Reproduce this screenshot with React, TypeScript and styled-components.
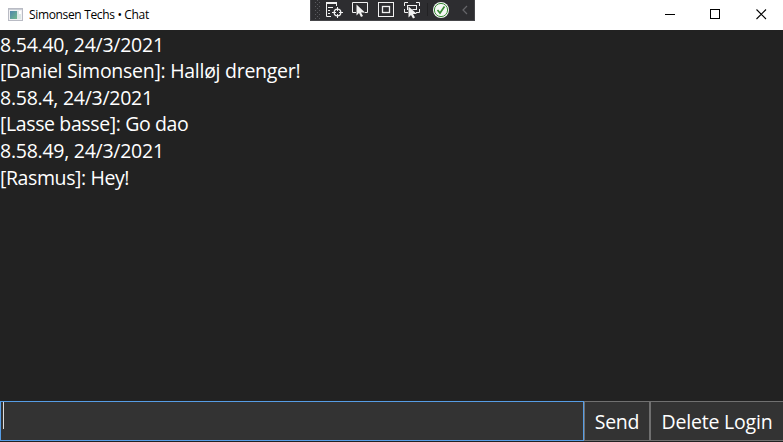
import React from "react";
import styled, { createGlobalStyle } from "styled-components";

const GlobalStyle = createGlobalStyle`
  * { box-sizing: border-box; }
  body { margin: 0; background: #222222; overflow: hidden; }
`;

const Window = styled.main`
  width: 783px;
  height: 442px;
  display: flex;
  flex-direction: column;
  background: #222222;
  color: #ffffff;
  font-family: "Open Sans", "Noto Sans", sans-serif;
  font-size: 19.5px;
  position: relative;
  overflow: hidden;
`;

const TitleBar = styled.header`
  height: 30px;
  flex: none;
  display: flex;
  align-items: center;
  background: #ffffff;
  color: #000000;
  padding-left: 8px;
`;

const Title = styled.h1`
  margin: 0 auto 0 6px;
  font-size: 12px;
  font-weight: 400;
  line-height: 30px;
  letter-spacing: -0.34px;
  white-space: nowrap;
`;

const WindowControls = styled.div`
  display: flex;
  margin-right: -1px;
`;

const WindowButton = styled.button`
  width: 45.5px;
  height: 30px;
  padding: 0 0 2px;
  border: 0;
  background: transparent;
  display: grid;
  place-items: center;
`;

const DebugBar = styled.div`
  position: absolute;
  left: 310px;
  top: 0;
  width: 165px;
  height: 21px;
  background: #2d2d30;
  border: 1px solid #46464a;
  border-top: 0;

  svg { display: block; margin-left: -1px; }
`;

const Messages = styled.section`
  flex: 1;
  padding-top: 1.6px;
`;

const Line = styled.div<{ $spacing: number }>`
  height: 26.6px;
  line-height: 26.6px;
  white-space: pre;
  letter-spacing: ${(p) => p.$spacing}px;
`;

const Composer = styled.footer`
  height: 41px;
  flex: none;
  display: flex;
  padding-bottom: 1px;
`;

const Input = styled.div`
  width: 584px;
  flex: none;
  height: 40px;
  background: #333333;
  border: 1px solid #569de5;
  padding-left: 2px;
`;

const Caret = styled.div`
  width: 1px;
  height: 27px;
  background: #dddddd;
`;

const Action = styled.button<{ $width: number; $spacing: number }>`
  width: ${(p) => p.$width}px;
  height: 40px;
  flex: none;
  padding: 1px 0 0;
  border: 1px solid #707070;
  background: #333333;
  color: #ffffff;
  font: inherit;
  letter-spacing: ${(p) => p.$spacing}px;
  white-space: nowrap;
`;

const messages = [
  { text: "8.54.40, 24/3/2021", spacing: -0.26 },
  { text: "[Daniel Simonsen]: Halløj drenger!", spacing: -0.27 },
  { text: "8.58.4, 24/3/2021", spacing: -0.26 },
  { text: "[Lasse basse]: Go dao", spacing: -0.38 },
  { text: "8.58.49, 24/3/2021", spacing: -0.26 },
  { text: "[Rasmus]: Hey!", spacing: -0.4 },
];

const gripDots = [0, 1, 2, 3, 4].flatMap((row) => [
  [5, 2 + row * 4],
  [9, 2 + row * 4],
  [7, row * 4],
]);

function AppIcon() {
  return (
    <svg width="15" height="14" viewBox="0 0 15 14" shapeRendering="crispEdges">
      <defs>
        <linearGradient id="pane" x1="0" y1="0" x2="1" y2="1">
          <stop offset="0" stopColor="#4f86ad" />
          <stop offset="1" stopColor="#72b98c" />
        </linearGradient>
      </defs>
      <rect x=".5" y=".5" width="14" height="12" fill="#f1f1f3" stroke="#b9bbc4" />
      <path d="M1 1.5h13" stroke="#c9cdd4" />
      <rect x="2" y="3" width="7" height="8" fill="url(#pane)" />
      <rect x="9" y="3" width="4" height="8" fill="#dce8e6" />
      <path d="M11 3h2v3h-2z" fill="#ffffff" />
    </svg>
  );
}

function DebugIcons() {
  return (
    <svg width="165" height="20" viewBox="0 0 165 20" fill="none">
      <g fill="#5a5a5e">
        {gripDots.map(([x, y]) => (
          <rect key={`${x}-${y}`} x={x} y={y} width="1" height="1" />
        ))}
      </g>
      <g stroke="#f1f1f1">
        <path d="M16 3h11" strokeWidth="2" />
        <path d="M16.5 4v12.5H21M26.5 4v2M18 7.5h5M18 10.5h2M18 13.5h2" />
        <circle cx="27.5" cy="12.5" r="3.3" strokeWidth="1.3" />
        <path d="M27.5 7v4M27.5 14v4M22 12.5h4M29 12.5h4" />
        <path d="M46 12.5h-3.500v-10h15v10H53" />
        <rect x="68.5" y="2.5" width="15" height="14" />
        <rect x="72.5" y="6.5" width="7" height="6" strokeWidth="1.3" />
        <path d="M94.5 6V2.5H98M106 2.5h3.500V6M94.5 9v3.500H98M109.5 9v3.500H106" />
        <rect x="97.5" y="5.5" width="9" height="4" />
      </g>
      <g fill="#f1f1f1" stroke="#2d2d30" strokeWidth=".8" paintOrder="stroke">
        <path d="M46.500 4.500v11l2.500-2.500 2 4 2-1-2-3.500H55z" />
        <path d="M98.500 6.500v11l2.500-2.500 2 3.500 2-1-2-3.500h4z" />
      </g>
      <path d="M117.5 3v13" stroke="#222224" />
      <circle cx="131" cy="10" r="8" fill="#f4f8f4" />
      <circle cx="131" cy="10" r="6.600" stroke="#388a34" />
      <path d="M127.500 10l2.500 3 4.500-6.500" stroke="#388a34" strokeWidth="1.700" />
      <path d="M157 6l-4 4 4 4" stroke="#66666a" strokeWidth="1.200" />
    </svg>
  );
}

export default function App() {
  return (
    <Window>
      <GlobalStyle />
      <TitleBar>
        <AppIcon />
        <Title>Simonsen Techs • Chat</Title>
        <WindowControls>
          <WindowButton aria-label="Minimize">
            <svg width="11" height="11"><path d="M0 5.5h10" stroke="#000" /></svg>
          </WindowButton>
          <WindowButton aria-label="Maximize">
            <svg width="11" height="11" shapeRendering="crispEdges"><rect x=".5" y=".5" width="9" height="9" fill="none" stroke="#000" /></svg>
          </WindowButton>
          <WindowButton aria-label="Close">
            <svg width="11" height="11"><path d="M.5.5l9.500 9.500M10 .5l-9.500 9.500" stroke="#000" strokeWidth="1.1" /></svg>
          </WindowButton>
        </WindowControls>
      </TitleBar>
      <DebugBar><DebugIcons /></DebugBar>
      <Messages>
        {messages.map((m) => (
          <Line key={m.text} $spacing={m.spacing}>{m.text}</Line>
        ))}
      </Messages>
      <Composer>
        <Input role="textbox"><Caret /></Input>
        <Action $width={66} $spacing={-0.25}>Send</Action>
        <Action $width={134} $spacing={-0.2}>Delete Login</Action>
      </Composer>
    </Window>
  );
}
